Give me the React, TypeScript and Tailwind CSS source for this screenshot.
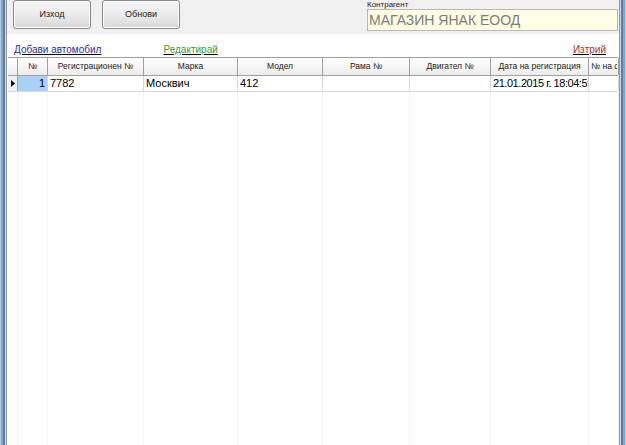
import { useState } from 'react'

const columns = [
  { id: 'num', label: '№', width: 30, align: 'center' },
  { id: 'reg', label: 'Регистрационен №', width: 96, align: 'center' },
  { id: 'brand', label: 'Марка', width: 94, align: 'center' },
  { id: 'model', label: 'Модел', width: 85, align: 'center' },
  { id: 'frame', label: 'Рама №', width: 87, align: 'center' },
  { id: 'engine', label: 'Двигател №', width: 81, align: 'center' },
  { id: 'date', label: 'Дата на регистрация', width: 98, align: 'center' },
  { id: 'cert', label: '№ на свидетелство', width: 30, align: 'left' },
]

const rows = [
  {
    num: '1',
    reg: '7782',
    brand: 'Москвич',
    model: '412',
    frame: '',
    engine: '',
    date: '21.01.2015 г. 18:04:59',
    cert: '',
  },
]

const font = { fontFamily: '"Liberation Sans", Arial, sans-serif' }

const WindowEdge = ({ side }: { side: 'left' | 'right' }) => (
  <div className={`flex h-full shrink-0 ${side === 'right' ? 'flex-row-reverse' : ''}`}>
    <div className="w-px bg-[#b9cbe0]" />
    <div className="w-[2px] bg-[#86a6c8]" />
    <div className="w-[2px] bg-[#5d7ea5]" />
    <div className="w-px bg-[#c9d6e6]" />
    <div className="w-px bg-[#9a9a9a]" />
  </div>
)

const ToolButton = ({ label }: { label: string }) => (
  <button className="h-[29px] w-[78px] rounded-[3px] border border-[#8a8a8a] bg-gradient-to-b from-[#f6f6f6] via-[#ebebeb] to-[#d9d9d9] text-[9px] text-[#1a1a1a] shadow-[inset_0_0_0_1px_#fcfcfc]">
    {label}
  </button>
)

export default function App() {
  const [selected] = useState(0)

  return (
    <div className="flex h-[445px] w-[626px] overflow-hidden bg-white" style={font}>
      <WindowEdge side="left" />

      <div className="flex min-w-0 flex-1 flex-col">
        {/* Top panel */}
        <div className="flex h-[34px] shrink-0 bg-[#f0f0f0]">
          <div className="ml-[6px] flex gap-[11px]">
            <ToolButton label="Изход" />
            <ToolButton label="Обнови" />
          </div>
          <div className="ml-auto mr-[1px] flex flex-col">
            <span className="text-[8px] leading-[9px] text-[#222]">Контрагент</span>
            <div className="flex h-[22px] w-[251px] items-center border border-[#b8b8b8] bg-[#fdfde4] px-[1px] text-[14px] text-[#7d7d7d]">
              МАГАЗИН ЯНАК ЕООД
            </div>
          </div>
        </div>

        {/* Links */}
        <div className="flex h-[23px] shrink-0 items-end pb-[1px] text-[10px] leading-[12px] underline">
          <span className="ml-[7px] text-[#2e2e96]">Добави автомобил</span>
          <span className="ml-[62px] text-[#3c9a3c]">Редактирай</span>
          <span className="ml-auto mr-[13px] text-[#a53232]">Изтрий</span>
        </div>

        {/* Grid */}
        <div className="ml-px mr-px flex flex-1 flex-col border-t border-[#a0a0a0]">
          <div className="flex h-[18px] shrink-0 border-b border-[#a0a0a0]">
            <div className="w-[10px] shrink-0 border-r border-[#a0a0a0] bg-gradient-to-b from-white to-[#ececec]" />
            {columns.map((col) => (
              <div
                key={col.id}
                className={`flex shrink-0 items-center overflow-hidden whitespace-nowrap border-r border-[#a0a0a0] bg-gradient-to-b from-white to-[#ececec] text-[8.5px] text-[#222] ${
                  col.align === 'left' ? 'justify-start pl-[2px]' : 'justify-center'
                }`}
                style={{ width: col.width }}
              >
                <span className={col.align === 'left' ? 'w-[26px] overflow-hidden' : ''}>{col.label}</span>
              </div>
            ))}
          </div>

          {rows.map((row, i) => (
            <div key={i} className="flex h-[16px] shrink-0 border-b border-[#d6d6d6]">
              <div className="flex w-[10px] shrink-0 items-center justify-center border-r border-[#a0a0a0] bg-[#f0f0f0]">
                {i === selected && (
                  <svg width="4" height="7" viewBox="0 0 4 7">
                    <path d="M0 0 L4 3.5 L0 7 Z" fill="#000" />
                  </svg>
                )}
              </div>
              {columns.map((col, j) => (
                <div
                  key={col.id}
                  className={`flex shrink-0 items-center overflow-hidden whitespace-nowrap border-r border-[#d6d6d6] px-[2px] text-[11px] text-black ${
                    j === 0 ? 'justify-end bg-[#a9d0f5]' : ''
                  } ${col.id === 'date' ? 'tracking-[-0.45px]' : ''}`}
                  style={{ width: col.width }}
                >
                  {row[col.id as keyof typeof row]}
                </div>
              ))}
            </div>
          ))}

          {/* Empty area with faint column guides */}
          <div className="flex flex-1">
            <div className="w-[10px] shrink-0 border-r border-[#f5f5f5]" />
            {columns.map((col) => (
              <div key={col.id} className="shrink-0 border-r border-[#f5f5f5]" style={{ width: col.width }} />
            ))}
          </div>
        </div>
      </div>

      <WindowEdge side="right" />
    </div>
  )
}
